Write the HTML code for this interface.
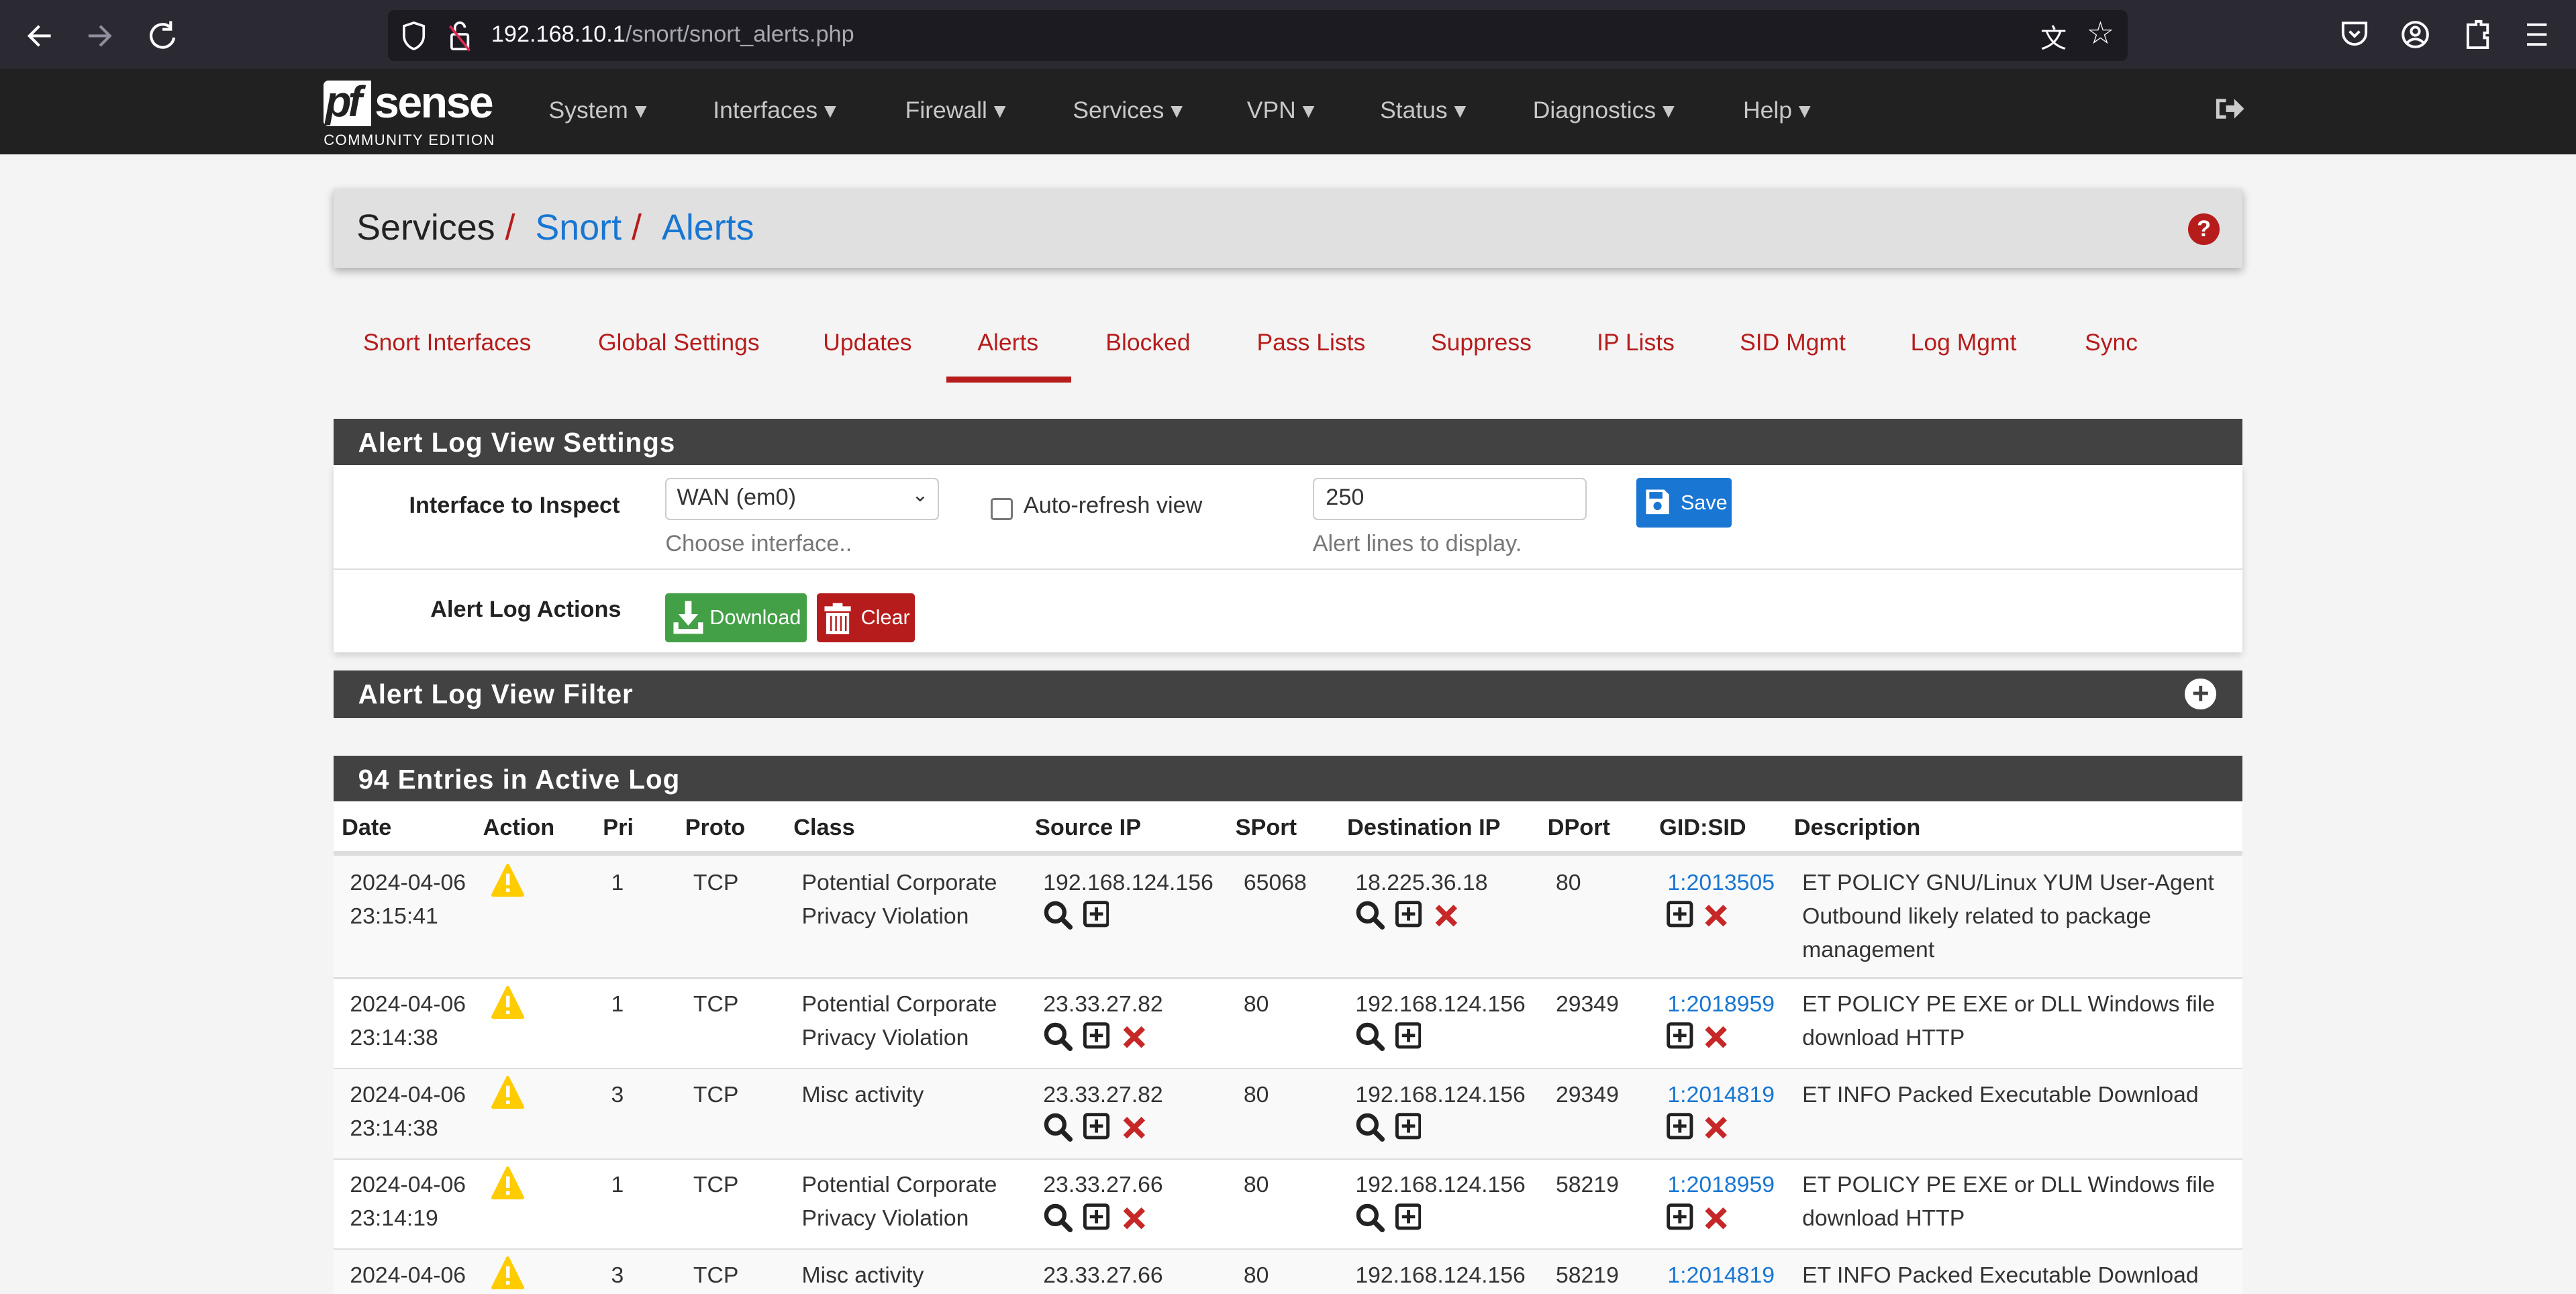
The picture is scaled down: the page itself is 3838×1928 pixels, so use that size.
<!DOCTYPE html>
<html><head><meta charset="utf-8">
<style>
html,body{margin:0;padding:0;}
body{width:1568px;height:787px;overflow:hidden;background:#f4f4f4;font-family:"Liberation Sans",sans-serif;zoom:2.44770;position:relative;color:#222;}
.a{position:absolute;white-space:nowrap;}
#tb{position:absolute;left:0;top:0;width:1568px;height:42px;background:#2b2a33;}
#url{position:absolute;left:236px;top:6px;width:1059px;height:31px;background:#1c1b22;border-radius:4px;}
#nav{position:absolute;left:0;top:42px;width:1568px;height:52px;background:#212121;}
.nv{color:#c8c8c8;font-size:14.5px;top:59px;}
.bc{position:absolute;left:203px;top:115px;width:1162px;height:48px;background:#e0e0e0;box-shadow:0 2px 5px rgba(0,0,0,.3);}
.tab{color:#b71c1c;font-size:14.5px;top:200px;}
.ph{position:absolute;left:203px;width:1162px;background:#424242;color:#fff;font-size:16.5px;font-weight:bold;letter-spacing:.4px;}
.ph span{position:absolute;left:15px;top:5px;}
.th{font-weight:bold;font-size:14px;top:496px;}
.c{font-size:13.8px;color:#333;line-height:20.5px;}
.lnk{color:#1976d2;}
</style></head><body>
<div id="tb"></div>
<div id="url"></div>
<svg class="a" style="left:14px;top:12px" width="100" height="20" viewBox="0 0 100 20" fill="none" stroke-width="1.7">
<path d="M17 10H4M10 4L4 10l6 6" stroke="#fbfbfe"/>
<path d="M40 10h13M47 4l6 6-6 6" stroke="#8f8f9d"/>
<path d="M90 5a7 7 0 1 0 2 6M90 1v5h-5" stroke="#fbfbfe"/>
</svg>
<svg class="a" style="left:244px;top:12px" width="44" height="20" viewBox="0 0 44 20" fill="none" stroke="#fbfbfe" stroke-width="1.5">
<path d="M8 2l6 2v6c0 4-3 7-6 8-3-1-6-4-6-8V4z"/>
<rect x="31" y="9" width="10" height="9" rx="1"/><path d="M33 9V5a3 3 0 0 1 6 0"/><path d="M30 4l12 15" stroke="#e22850"/>
</svg>
<div class="a" style="left:299px;top:13px;font-size:14px;color:#fbfbfe">192.168.10.1<span style="color:#a8a8b0">/snort/snort_alerts.php</span></div>
<div class="a" style="left:1242px;top:11px;font-size:16px;color:#fbfbfe">文</div>
<div class="a" style="left:1270px;top:9px;font-size:19px;color:#fbfbfe">☆</div>
<svg class="a" style="left:1424px;top:11px" width="130" height="22" viewBox="0 0 130 22" fill="none" stroke="#fbfbfe" stroke-width="1.6">
<path d="M2 3h14v6a7 7 0 0 1-14 0z"/><path d="M6 8l3 3 3-3"/>
<circle cx="46" cy="10" r="7.5"/><circle cx="46" cy="8" r="2.5"/><path d="M41 15c3-3 7-3 10 0"/>
<path d="M78 4h5v-2h3v2h4v5h-2v3h2v6H78z"/>
<path d="M114 4h12M114 10h12M114 16h12"/>
</svg>
<div id="nav"></div>
<div class="a" style="left:197px;top:49px;width:29px;height:28px;background:#fff;border-radius:3px 0 0 3px"></div>
<div class="a" style="left:198px;top:47px;font-size:26px;font-weight:bold;font-style:italic;color:#212121;letter-spacing:-2px">pf</div>
<div class="a" style="left:228px;top:47px;font-size:27px;font-weight:bold;color:#fff;letter-spacing:-1px">sense</div>
<div class="a" style="left:197px;top:80px;font-size:9px;color:#fff;letter-spacing:.6px">COMMUNITY EDITION</div>
<div class="a nv" style="left:334px">System ▾</div>
<div class="a nv" style="left:434px">Interfaces ▾</div>
<div class="a nv" style="left:551px">Firewall ▾</div>
<div class="a nv" style="left:653px">Services ▾</div>
<div class="a nv" style="left:759px">VPN ▾</div>
<div class="a nv" style="left:840px">Status ▾</div>
<div class="a nv" style="left:933px">Diagnostics ▾</div>
<div class="a nv" style="left:1061px">Help ▾</div>
<svg class="a" style="left:1347px;top:57px" width="20" height="18" viewBox="0 0 20 18"><path d="M2 3h6v2H4v8h4v2H2z M8 7h5V3l6 6-6 6v-4H8z" fill="#ccc"/></svg>
<div class="bc"></div>
<div class="a" style="left:217px;top:126px;font-size:22px;color:#222">Services <span style="color:#b71c1c">/</span> <span class="lnk">&nbsp;Snort</span> <span style="color:#b71c1c">/</span> <span class="lnk">&nbsp;Alerts</span></div>
<div class="a" style="left:1332px;top:130px;width:19px;height:19px;border-radius:50%;background:#b71c1c;color:#fff;font-size:14px;font-weight:bold;text-align:center;line-height:19px">?</div>
<div class="a tab" style="left:221px">Snort Interfaces</div>
<div class="a tab" style="left:364px">Global Settings</div>
<div class="a tab" style="left:501px">Updates</div>
<div class="a tab" style="left:595px">Alerts</div>
<div class="a" style="left:576px;top:229px;width:76px;height:4px;background:#b71c1c"></div>
<div class="a tab" style="left:673px">Blocked</div>
<div class="a tab" style="left:765px">Pass Lists</div>
<div class="a tab" style="left:871px">Suppress</div>
<div class="a tab" style="left:972px">IP Lists</div>
<div class="a tab" style="left:1059px">SID Mgmt</div>
<div class="a tab" style="left:1163px">Log Mgmt</div>
<div class="a tab" style="left:1269px">Sync</div>

<div class="ph" style="top:255px;height:28px"><span>Alert Log View Settings</span></div>
<div class="a" style="left:203px;top:283px;width:1162px;height:114px;background:#fff;box-shadow:0 2px 4px rgba(0,0,0,.15)"></div>
<div class="a" style="left:203px;top:346px;width:1162px;height:1px;background:#ddd"></div>
<div class="a" style="left:249px;top:300px;font-size:14px;font-weight:bold">Interface to Inspect</div>
<div class="a" style="left:405px;top:291px;width:165px;height:24px;border:1px solid #ccc;background:#fff;border-radius:3px"></div>
<div class="a" style="left:412px;top:295px;font-size:14px;color:#333">WAN (em0)</div>
<div class="a" style="left:555px;top:294px;font-size:12px;color:#333">⌄</div>
<div class="a" style="left:405px;top:323px;font-size:14px;color:#777">Choose interface..</div>
<div class="a" style="left:603px;top:303px;width:11px;height:11px;border:1.5px solid #777;border-radius:2px;background:#fff"></div>
<div class="a" style="left:623px;top:300px;font-size:14px;color:#333">Auto-refresh view</div>
<div class="a" style="left:799px;top:291px;width:165px;height:24px;border:1px solid #ccc;background:#fff;border-radius:3px"></div>
<div class="a" style="left:807px;top:295px;font-size:14px;color:#333">250</div>
<div class="a" style="left:799px;top:323px;font-size:14px;color:#777">Alert lines to display.</div>
<div class="a" style="left:996px;top:291px;width:58px;height:30px;background:#1976d2;border-radius:2px"></div>
<svg class="a" style="left:1001px;top:297px" width="16" height="17" viewBox="0 0 16 17"><path d="M1 1h11l3 3v12H1z" fill="#fff"/><rect x="3" y="2.5" width="8" height="4" fill="#1976d2"/><circle cx="8" cy="11" r="2.5" fill="#1976d2"/></svg>
<div class="a" style="left:1023px;top:299px;font-size:12.5px;color:#fff">Save</div>
<div class="a" style="left:262px;top:363px;font-size:14px;font-weight:bold">Alert Log Actions</div>
<div class="a" style="left:405px;top:361px;width:86px;height:30px;background:#43a047;border-radius:2px"></div>
<svg class="a" style="left:409px;top:365px" width="20" height="22" viewBox="0 0 20 22"><path d="M8 1h4v8h4l-6 7-6-7h4z M1 14h3v4h12v-4h3v7H1z" fill="#fff"/></svg>
<div class="a" style="left:432px;top:369px;font-size:12.5px;color:#fff">Download</div>
<div class="a" style="left:497px;top:361px;width:60px;height:30px;background:#b71c1c;border-radius:2px"></div>
<svg class="a" style="left:501px;top:366px" width="18" height="21" viewBox="0 0 18 21"><path d="M6 1h6v2h5v3H1V3h5z M2 7h14v13H2z" fill="#fff"/><path d="M5 9v9M8 9v9M11 9v9M14 9v9" stroke="#b71c1c" stroke-width="1"/></svg>
<div class="a" style="left:524px;top:369px;font-size:12.5px;color:#fff">Clear</div>

<div class="ph" style="top:408px;height:29px"><span>Alert Log View Filter</span></div>
<div class="a" style="left:1330px;top:413px;width:19px;height:19px;border-radius:50%;background:#fff;color:#424242;font-size:18px;font-weight:bold;text-align:center;line-height:19px">+</div>

<div class="ph" style="top:460px;height:28px"><span>94 Entries in Active Log</span></div>
<div class="a" style="left:203px;top:488px;width:1162px;height:299px;background:#fff"></div>
<div class="a" style="left:203px;top:518px;width:1162px;height:3px;background:#ddd"></div>
<div class="a" style="left:203px;top:521px;width:1162px;height:74px;background:#f9f9f9"></div>
<div class="a" style="left:203px;top:595px;width:1162px;height:1px;background:#ddd"></div>
<div class="a" style="left:203px;top:650px;width:1162px;height:55px;background:#f9f9f9;border-top:1px solid #ddd"></div>
<div class="a" style="left:203px;top:705px;width:1162px;height:1px;background:#ddd"></div>
<div class="a" style="left:203px;top:760px;width:1162px;height:27px;background:#f9f9f9;border-top:1px solid #ddd"></div>
<div class="a th" style="left:208px">Date</div>
<div class="a th" style="left:294px">Action</div>
<div class="a th" style="left:367px">Pri</div>
<div class="a th" style="left:417px">Proto</div>
<div class="a th" style="left:483px">Class</div>
<div class="a th" style="left:630px">Source IP</div>
<div class="a th" style="left:752px">SPort</div>
<div class="a th" style="left:820px">Destination IP</div>
<div class="a th" style="left:942px">DPort</div>
<div class="a th" style="left:1010px">GID:SID</div>
<div class="a th" style="left:1092px">Description</div>

<svg width="0" height="0" style="position:absolute">
<defs>
<g id="warn"><path d="M10 1L19 19H1z" fill="#ffcc00" stroke="#ffcc00" stroke-linejoin="round" stroke-width="2"/><rect x="9" y="6" width="2.2" height="7" fill="#fff"/><rect x="9" y="15" width="2.2" height="2.2" fill="#fff"/></g>
<g id="mag"><circle cx="7.5" cy="7.5" r="5.5" fill="none" stroke="#222" stroke-width="2.6"/><path d="M11.5 11.5l5 5" stroke="#222" stroke-width="3" stroke-linecap="round"/></g>
<g id="plus"><rect x="1.5" y="1.5" width="14" height="14" rx="1.5" fill="none" stroke="#222" stroke-width="2"/><path d="M8.5 4.5v8M4.5 8.5h8" stroke="#222" stroke-width="2"/></g>
<g id="x"><path d="M3 3l11 11M14 3L3 14" stroke="#c62828" stroke-width="3.2"/></g>
</defs></svg>

<div class="a c" style="left:213px;top:527px">2024-04-06<br>23:15:41</div>
<svg class="a" style="left:299px;top:526px" width="20" height="20"><use href="#warn"/></svg>
<div class="a c" style="left:372px;top:527px">1</div>
<div class="a c" style="left:422px;top:527px">TCP</div>
<div class="a c" style="left:488px;top:527px">Potential Corporate<br>Privacy Violation</div>
<div class="a c" style="left:635px;top:527px">192.168.124.156</div>
<svg class="a" style="left:635px;top:548px" width="40" height="20"><use href="#mag"/><use href="#plus" x="24"/></svg>
<div class="a c" style="left:757px;top:527px">65068</div>
<div class="a c" style="left:825px;top:527px">18.225.36.18</div>
<svg class="a" style="left:825px;top:548px" width="64" height="20"><use href="#mag"/><use href="#plus" x="24"/><use href="#x" x="47" y="1"/></svg>
<div class="a c" style="left:947px;top:527px">80</div>
<div class="a c lnk" style="left:1015px;top:527px">1:2013505</div>
<svg class="a" style="left:1014px;top:548px" width="40" height="20"><use href="#plus"/><use href="#x" x="22" y="1"/></svg>
<div class="a c" style="left:1097px;top:527px">ET POLICY GNU/Linux YUM User-Agent<br>Outbound likely related to package<br>management</div>

<div class="a c" style="left:213px;top:601px">2024-04-06<br>23:14:38</div>
<svg class="a" style="left:299px;top:600px" width="20" height="20"><use href="#warn"/></svg>
<div class="a c" style="left:372px;top:601px">1</div>
<div class="a c" style="left:422px;top:601px">TCP</div>
<div class="a c" style="left:488px;top:601px">Potential Corporate<br>Privacy Violation</div>
<div class="a c" style="left:635px;top:601px">23.33.27.82</div>
<svg class="a" style="left:635px;top:622px" width="64" height="20"><use href="#mag"/><use href="#plus" x="24"/><use href="#x" x="47" y="1"/></svg>
<div class="a c" style="left:757px;top:601px">80</div>
<div class="a c" style="left:825px;top:601px">192.168.124.156</div>
<svg class="a" style="left:825px;top:622px" width="40" height="20"><use href="#mag"/><use href="#plus" x="24"/></svg>
<div class="a c" style="left:947px;top:601px">29349</div>
<div class="a c lnk" style="left:1015px;top:601px">1:2018959</div>
<svg class="a" style="left:1014px;top:622px" width="40" height="20"><use href="#plus"/><use href="#x" x="22" y="1"/></svg>
<div class="a c" style="left:1097px;top:601px">ET POLICY PE EXE or DLL Windows file<br>download HTTP</div>

<div class="a c" style="left:213px;top:656px">2024-04-06<br>23:14:38</div>
<svg class="a" style="left:299px;top:655px" width="20" height="20"><use href="#warn"/></svg>
<div class="a c" style="left:372px;top:656px">3</div>
<div class="a c" style="left:422px;top:656px">TCP</div>
<div class="a c" style="left:488px;top:656px">Misc activity</div>
<div class="a c" style="left:635px;top:656px">23.33.27.82</div>
<svg class="a" style="left:635px;top:677px" width="64" height="20"><use href="#mag"/><use href="#plus" x="24"/><use href="#x" x="47" y="1"/></svg>
<div class="a c" style="left:757px;top:656px">80</div>
<div class="a c" style="left:825px;top:656px">192.168.124.156</div>
<svg class="a" style="left:825px;top:677px" width="40" height="20"><use href="#mag"/><use href="#plus" x="24"/></svg>
<div class="a c" style="left:947px;top:656px">29349</div>
<div class="a c lnk" style="left:1015px;top:656px">1:2014819</div>
<svg class="a" style="left:1014px;top:677px" width="40" height="20"><use href="#plus"/><use href="#x" x="22" y="1"/></svg>
<div class="a c" style="left:1097px;top:656px">ET INFO Packed Executable Download</div>

<div class="a c" style="left:213px;top:711px">2024-04-06<br>23:14:19</div>
<svg class="a" style="left:299px;top:710px" width="20" height="20"><use href="#warn"/></svg>
<div class="a c" style="left:372px;top:711px">1</div>
<div class="a c" style="left:422px;top:711px">TCP</div>
<div class="a c" style="left:488px;top:711px">Potential Corporate<br>Privacy Violation</div>
<div class="a c" style="left:635px;top:711px">23.33.27.66</div>
<svg class="a" style="left:635px;top:732px" width="64" height="20"><use href="#mag"/><use href="#plus" x="24"/><use href="#x" x="47" y="1"/></svg>
<div class="a c" style="left:757px;top:711px">80</div>
<div class="a c" style="left:825px;top:711px">192.168.124.156</div>
<svg class="a" style="left:825px;top:732px" width="40" height="20"><use href="#mag"/><use href="#plus" x="24"/></svg>
<div class="a c" style="left:947px;top:711px">58219</div>
<div class="a c lnk" style="left:1015px;top:711px">1:2018959</div>
<svg class="a" style="left:1014px;top:732px" width="40" height="20"><use href="#plus"/><use href="#x" x="22" y="1"/></svg>
<div class="a c" style="left:1097px;top:711px">ET POLICY PE EXE or DLL Windows file<br>download HTTP</div>

<div class="a c" style="left:213px;top:766px">2024-04-06</div>
<svg class="a" style="left:299px;top:765px" width="20" height="20"><use href="#warn"/></svg>
<div class="a c" style="left:372px;top:766px">3</div>
<div class="a c" style="left:422px;top:766px">TCP</div>
<div class="a c" style="left:488px;top:766px">Misc activity</div>
<div class="a c" style="left:635px;top:766px">23.33.27.66</div>
<div class="a c" style="left:757px;top:766px">80</div>
<div class="a c" style="left:825px;top:766px">192.168.124.156</div>
<div class="a c" style="left:947px;top:766px">58219</div>
<div class="a c lnk" style="left:1015px;top:766px">1:2014819</div>
<div class="a c" style="left:1097px;top:766px">ET INFO Packed Executable Download</div>
</body></html>
